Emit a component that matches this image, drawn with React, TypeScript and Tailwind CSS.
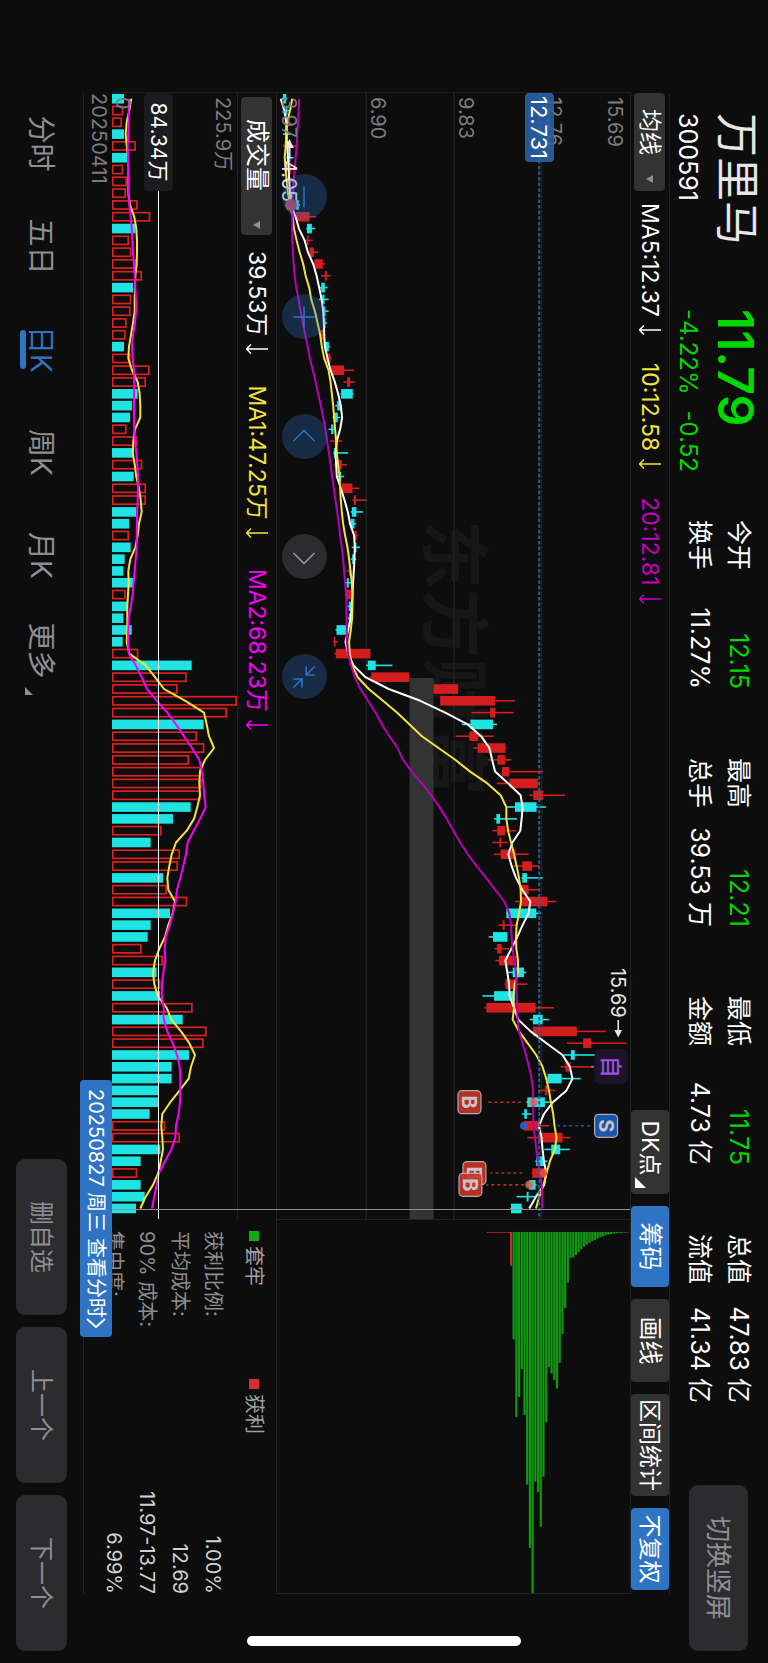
import { useState } from "react";
import type { ReactNode } from "react";

// [low, bodyLow, bodyHigh, high, up] - heights in ticks above the chart floor
const CANDLES: number[][] = [
  [15, 18, 28, 31, 0], [21, 26, 31, 39, 0], [24, 28, 34, 38, 1], [18, 28, 33, 40, 0], [18, 33, 40, 64, 1],
  [28, 35, 40, 50, 0], [30, 34, 42, 46, 1], [28, 32, 40, 48, 1], [34, 38, 44, 52, 1], [40, 56, 66, 69, 0],
  [57, 57, 98, 118, 1], [88, 90, 105, 115, 0], [80, 90, 95, 108, 1], [95, 98, 111, 124, 1], [111, 113, 138, 145, 1],
  [133, 144, 150, 161, 1], [128, 133, 144, 152, 0], [126, 136, 143, 155, 0], [137, 139, 146, 155, 0], [138, 139, 146, 151, 0],
  [130, 131, 145, 146, 1], [143, 144, 156, 160, 0], [146, 148, 161, 164, 1], [160, 163, 202, 232, 1], [200, 211, 220, 234, 1],
  [191, 193, 228, 230, 0], [175, 181, 193, 195, 0], [167, 171, 183, 190, 0], [155, 163, 170, 177, 0], [160, 174, 180, 196, 1],
  [169, 171, 178, 214, 0], [172, 181, 195, 210, 1], [183, 187, 193, 202, 0], [193, 195, 227, 248, 1], [227, 231, 238, 270, 1],
  [222, 225, 239, 259, 0], [216, 222, 233, 238, 0], [229, 232, 240, 244, 1], [225, 234, 239, 250, 0], [222, 226, 234, 238, 0],
  [211, 216, 221, 225, 1], [203, 210, 216, 227, 0], [204, 207, 223, 225, 1], [212, 216, 224, 228, 0], [213, 216, 224, 228, 0],
  [176, 179, 210, 212, 0], [169, 171, 176, 183, 1], [172, 177, 281, 281, 1], [268, 273, 297, 347, 0], [279, 284, 398, 398, 1],
  [471, 471, 545, 545, 1], [491, 491, 656, 716, 1], [585, 641, 657, 712, 1], [556, 582, 650, 662, 0], [537, 579, 605, 652, 1],
  [591, 604, 686, 691, 1], [636, 663, 687, 705, 1], [677, 677, 699, 801, 1], [661, 699, 785, 787, 1], [759, 771, 800, 866, 1],
  [691, 716, 781, 809, 0], [653, 660, 671, 722, 0], [648, 663, 686, 720, 1], [648, 669, 675, 695, 1], [652, 673, 718, 757, 1],
  [707, 738, 767, 789, 1], [735, 738, 752, 799, 0], [733, 733, 757, 789, 1], [716, 733, 813, 840, 1], [690, 690, 780, 794, 0],
  [666, 679, 685, 721, 1], [637, 650, 693, 693, 0], [654, 662, 676, 698, 1], [657, 668, 719, 722, 1], [691, 709, 743, 750, 0],
  [685, 687, 721, 754, 1], [618, 653, 716, 716, 0], [624, 630, 778, 833, 1], [760, 770, 799, 818, 0], [770, 770, 902, 989, 1],
  [872, 921, 946, 1052, 1], [862, 884, 896, 998, 0], [854, 868, 883, 950, 1], [808, 814, 856, 914, 0], [786, 806, 813, 836, 1],
  [750, 753, 806, 821, 0], [737, 744, 752, 766, 0], [743, 743, 789, 818, 1], [753, 787, 859, 883, 1], [804, 825, 852, 881, 0],
  [777, 780, 803, 814, 0], [766, 768, 811, 811, 1], [753, 758, 778, 781, 0], [721, 751, 757, 777, 0], [702, 704, 736, 739, 0],
];

const MA5 = [
  11, 22, 28, 28, 31, 33, 35, 37, 39, 42, 56, 66, 83, 93, 109, 119, 127, 134, 139, 141, 142, 144, 152, 161, 174, 184, 192, 196,
  190, 180, 176, 178, 180, 192, 203, 213, 220, 232, 234, 233, 231, 229, 227, 225, 222, 214, 206, 214, 230, 266, 336, 431, 506,
  574, 614, 639, 647, 656, 696, 733, 739, 736, 732, 708, 696, 706, 719, 738, 762, 757, 739, 723, 705, 687, 693, 698, 700, 713,
  726, 763, 811, 859, 881, 889, 871, 830, 803, 788, 796, 799, 803, 810, 804, 779, 759,
];
const MA10 = [
  46, 39, 31, 28, 26, 23, 26, 29, 33, 39, 47, 51, 59, 68, 79, 86, 97, 103, 114, 122, 130, 135, 142, 155, 161, 165, 169, 172,
  175, 178, 180, 184, 188, 190, 192, 195, 199, 205, 212, 217, 221, 225, 227, 227, 226, 222, 217, 219, 226, 243, 276, 319, 361,
  399, 436, 486, 536, 581, 633, 673, 690, 690, 695, 704, 713, 721, 728, 733, 734, 728, 721, 719, 720, 725, 725, 715, 711, 713,
  709, 728, 754, 780, 799, 810, 818, 824, 831, 835, 841, 836, 821, 811, 802, 789, 779,
];
const MA20 = [
  67, 65, 63, 61, 59, 56, 53, 50, 48, 46, 46, 46, 46, 48, 50, 53, 58, 65, 71, 78, 85, 92, 99, 108, 116, 124, 132, 139, 146, 151,
  156, 161, 166, 171, 176, 181, 186, 190, 195, 199, 202, 205, 208, 209, 209, 210, 210, 214, 223, 234, 251, 274, 296, 316, 338,
  363, 379, 406, 436, 464, 489, 511, 531, 551, 574, 601, 629, 656, 684, 699, 704, 706, 709, 714, 719, 720, 721, 722, 724, 728,
  739, 749, 758, 766, 770, 771, 771, 772, 776, 780, 785, 792, 796, 798, 798,
];

const VOLUMES = [
  36, 34, 30, 36, 72, 45, 34, 45, 42, 77, 115, 70, 51, 58, 72, 90, 63, 58, 56, 44, 41, 36, 56, 113, 102, 77, 60, 54, 44, 75, 66,
  91, 65, 102, 102, 73, 51, 51, 56, 38, 34, 65, 41, 46, 34, 59, 32, 79, 239, 224, 197, 375, 345, 275, 255, 277, 231, 266, 269,
  266, 236, 183, 149, 116, 204, 198, 153, 165, 226, 174, 116, 107, 89, 153, 134, 145, 144, 242, 212, 284, 275, 231, 179, 179,
  139, 139, 113, 160, 204, 145, 86, 76, 86, 98, 72,
];
// ten bars per row, 1 = up day
const VOLUME_UP = [
  "0110101111",
  "1011110111",
  "1011100011",
  "0101100100",
  "0010000101",
  "1110111111",
  "0010110110",
  "0011010101",
  "1000000110",
  "01000",
].join("");
const VOL_MA1 = [
  58, 52, 44, 41, 44, 48, 49, 49, 49, 54, 67, 73, 75, 75, 74, 70, 69, 68, 68, 63, 57, 51, 49, 60, 77, 83, 85, 85, 69, 64, 62, 68,
  73, 81, 86, 89, 81, 77, 70, 55, 49, 50, 48, 46, 46, 46, 44, 52, 101, 129, 156, 220, 276, 284, 291, 306, 279, 264, 262, 264,
  256, 246, 224, 192, 179, 172, 166, 169, 189, 182, 169, 159, 142, 129, 123, 127, 137, 164, 178, 207, 232, 249, 237, 230, 203,
  175, 151, 148, 151, 153, 146, 139, 123, 101, 85,
];
const VOL_MA2 = [
  51, 50, 50, 49, 47, 48, 48, 49, 49, 52, 56, 59, 61, 63, 66, 68, 70, 72, 72, 69, 63, 60, 62, 66, 67, 66, 66, 66, 67, 69, 73, 76,
  78, 78, 77, 76, 75, 74, 74, 71, 68, 65, 62, 56, 50, 49, 48, 50, 71, 89, 105, 135, 166, 192, 216, 240, 262, 270, 274, 277, 281,
  264, 245, 227, 222, 214, 205, 195, 191, 183, 173, 161, 158, 160, 154, 150, 149, 155, 155, 166, 182, 195, 203, 205, 205, 204,
  200, 192, 190, 178, 159, 141, 134, 127, 120,
];

const CHIPS = [
  324, 558, 498, 414, 552, 762, 953, 1089, 753, 785, 889, 738, 574, 408, 427, 447, 472, 395, 308, 229, 153, 78, 77, 70, 61, 52,
  44, 38, 33, 28, 24, 20, 16, 13, 10, 8, 6, 5, 4, 3, 3, 2, 2,
];

const UP = "#d41e1e";
const DOWN = "#20e3e3";
const STEP = 11.806;
const W = 1126;
const H = 354;
const VH = 125;

const cx = (i: number) => 5.7 + i * STEP;
const py = (t: number) => H - t / 3;
const line = (values: number[], height: number) =>
  values.map((v, i) => `${cx(i).toFixed(1)},${(height - v / 3).toFixed(1)}`).join(" ");

const QUOTES = [
  { label: "今开", value: "12.15", green: true },
  { label: "最高", value: "12.21", green: true },
  { label: "最低", value: "11.75", green: true },
  { label: "总值", value: "47.83 亿", green: false },
  { label: "换手", value: "11.27%", green: false },
  { label: "总手", value: "39.53 万", green: false },
  { label: "金额", value: "4.73 亿", green: false },
  { label: "流值", value: "41.34 亿", green: false },
];

const STATS = [
  ["获利比例:", "1.00%"],
  ["平均成本:", "12.69"],
  ["90% 成本:", "11.97-13.77"],
  ["集中度:", "6.99%"],
];

const PERIODS = ["分时", "五日", "日K", "周K", "月K", "更多"];

function Down() {
  return (
    <svg viewBox="0 0 10 22" className="ml-2 h-[22px] w-[10px]" fill="none" stroke="currentColor" strokeWidth="1.4" aria-hidden="true">
      <path d="M5 0V21.5M0.6 17L5 21.5L9.4 17" />
    </svg>
  );
}

function Average({ className, children }: { className: string; children: ReactNode }) {
  return (
    <span className={`flex items-center whitespace-nowrap text-[23px] leading-none ${className}`}>
      {children}
      <Down />
    </span>
  );
}

function Marker({ i, y, letter }: { i: number; y: number; letter: string }) {
  return (
    <g>
      <rect x={cx(i) - 11.5} y={y} width="23" height="23" rx="4" fill={letter === "B" ? "#c73428" : "#1b5ebd"} fillOpacity="0.9" stroke="#b5a9ab" strokeWidth="1.2" />
      <text x={cx(i)} y={y + 18.5} textAnchor="middle" fontSize="20" fontWeight="700" fill="#c9c3c6">
        {letter}
      </text>
    </g>
  );
}

function PriceChart() {
  return (
    <svg viewBox={`0 0 ${W} ${H}`} preserveAspectRatio="none" className="block h-full w-full" role="img" aria-label="K线图">
      <text x="427" y="202" fontSize="69" fontWeight="700" fill="#171717">东方财富</text>
      {[88.5, 176.5, 264.5].map((y) => (
        <line key={y} x1="0" x2={W} y1={y} y2={y} stroke="#222224" strokeWidth="1.4" />
      ))}
      <rect x="585" y="197" width="541" height="24" fill="#333333" />

      {CANDLES.map(([low, bodyLow, bodyHigh, high, up], i) => (
        <g key={i} fill={up ? UP : DOWN}>
          <rect x={cx(i) - 0.8} y={py(high)} width="1.6" height={(high - low) / 3} />
          <rect x={cx(i) - 4.8} y={py(bodyHigh)} width="9.6" height={(bodyHigh - bodyLow) / 3} />
        </g>
      ))}

      {/* trade markers */}
      <g strokeWidth="1.6" strokeDasharray="3 3">
        <line x1={cx(85)} x2={cx(85)} y1="109" y2="145" stroke="#b0301f" />
        <line x1={cx(91)} x2={cx(91)} y1="108" y2="140" stroke="#b0301f" />
        <line x1={cx(92)} x2={cx(92)} y1="106" y2="144" stroke="#b0301f" />
        <line x1={cx(87)} x2={cx(87)} y1="40" y2="76" stroke="#1d52a5" />
      </g>
      <Marker i={85} y={149.5} letter="B" />
      <Marker i={91} y={144.5} letter="B" />
      <Marker i={92} y={148.5} letter="B" />
      <Marker i={87} y={12.5} letter="S" />

      <g fill="none" strokeWidth="2" strokeLinejoin="round">
        <polyline points={line(MA5, H)} stroke="#ffffff" />
        <polyline points={line(MA10, H)} stroke="#f3e53c" />
        <polyline points={line(MA20, H)} stroke="#b800b8" />
      </g>
      <circle cx={cx(85)} cy={py(772)} r="4" fill="#e0645a" fillOpacity="0.85" />
      <circle cx={cx(91)} cy={py(801)} r="4" fill="#e0542f" fillOpacity="0.85" />
      <circle cx={cx(92)} cy={py(759)} r="4" fill="#e0645a" fillOpacity="0.85" />
      <circle cx={cx(87)} cy={py(743)} r="4" fill="#3060c8" fillOpacity="0.9" />

      <g fill="#e6e6e6" fontSize="20">
        <text x="67" y="349">4.05</text>
        <text x="875" y="19">15.69</text>
        <path d="M46 341.5L55 337V340.500H66V342.500H55V346Z" />
        <path d="M944.500 11.800L937 8V11H927V12.600H937V15.600Z" />
      </g>
      <circle cx={cx(9)} cy={py(42)} r="6" fill="#c23c58" />

      <rect x={cx(82) - 17.5} y="2.500" width="35" height="33" rx="5" fill="#1e1428" />
      <text x={cx(82)} y="27" textAnchor="middle" fontSize="22" fontWeight="500" fill="#9a50e6">自</text>
      <rect x={cx(82) - 1} y="36" width="2" height="3" fill="#9a50e6" />

      <line x1="0" x2={W} y1="91" y2="91" stroke="#2c5f9f" strokeWidth="2" strokeDasharray="3.6 2" />
    </svg>
  );
}

function VolumeChart() {
  return (
    <svg viewBox={`0 0 ${W} ${VH}`} preserveAspectRatio="none" className="block h-full w-full" role="img" aria-label="成交量">
      {VOLUMES.map((v, i) =>
        VOLUME_UP[i] === "1" ? (
          <rect key={i} x={cx(i) - 4.1} y={VH - v / 3 + 0.8} width="8.2" height={v / 3 - 1.6} fill="none" stroke="#dc2020" strokeWidth="1.7" />
        ) : (
          <rect key={i} x={cx(i) - 4.8} y={VH - v / 3} width="9.6" height={v / 3} fill={DOWN} />
        )
      )}
      <g fill="none" strokeWidth="2" strokeLinejoin="round">
        <polyline points={line(VOL_MA1, VH)} stroke="#f3e53c" />
        <polyline points={line(VOL_MA2, VH)} stroke="#fa00fa" />
      </g>
    </svg>
  );
}

function ChipChart() {
  return (
    <svg viewBox={`0 0 375 ${H}`} preserveAspectRatio="none" className="block h-full w-full" role="img" aria-label="筹码分布">
      {CHIPS.map((len, i) => (
        <rect key={i} x="12" y={py(712 + i * 8.15) - 1.1} width={len / 3} height="2.200" fill="#109a12" />
      ))}
      <rect x="12" y={py(704) - 1} width="34" height="2" fill="#cc2a2a" />
      {[634, 642, 650, 658, 666, 674, 682, 690, 698].map((t) => (
        <rect key={t} x="12" y={py(t) - 1} width="1" height="2" fill="#cc2a2a" />
      ))}
    </svg>
  );
}

function ControlButton({ label, muted, children }: { label: string; muted?: boolean; children: ReactNode }) {
  return (
    <button
      type="button"
      aria-label={label}
      className={`flex size-[45px] items-center justify-center rounded-full ${
        muted ? "bg-[#2c2c2e] text-[#9a9a9e]" : "bg-[#2f74c4]/30 text-[#2f74c4]"
      }`}
    >
      <svg viewBox="0 0 24 24" className="size-6" fill="none" stroke="currentColor" strokeWidth="1.5" aria-hidden="true">
        {children}
      </svg>
    </button>
  );
}

export default function App() {
  const [period, setPeriod] = useState("日K");

  return (
    <main className="h-screen w-screen overflow-hidden bg-[#0d0d0d]">
      {/* landscape page on a portrait screen */}
      <div className="relative flex h-[100vw] w-[100vh] origin-top-left translate-x-[100vw] rotate-90 flex-col font-['Inter','Noto_Sans_CJK_SC',sans-serif] text-white">
        {/* ── Quote header ── */}
        <header className="flex h-[98px] shrink-0 items-start pl-[113px] pr-3">
          <div className="w-[196px] pt-[7px]">
            <h1 className="whitespace-nowrap text-[44px] leading-[48px] text-[#e6e6e6]">万里马</h1>
            <p className="pt-[10px] text-[25px] leading-[30px]">300591</p>
          </div>
          <div className="w-[211px] pt-[7px] text-[#00d800]">
            <p className="text-[50px] font-semibold leading-[50px]">11.79</p>
            <p className="flex gap-4 whitespace-nowrap pt-2 text-[24px] leading-[30px]">
              <span>-4.22%</span>
              <span>-0.52</span>
            </p>
          </div>
          <dl className="grid w-[883px] grid-cols-4 gap-x-[69px] pt-[10px]">
            {QUOTES.map((q) => (
              <div key={q.label} className="flex items-center justify-between whitespace-nowrap text-[25px] leading-[39px]">
                <dt>{q.label}</dt>
                <dd className={q.green ? "text-[#00d800]" : "text-white"}>{q.value}</dd>
              </div>
            ))}
          </dl>
          <button type="button" className="ml-auto mt-5 h-[59px] w-[166px] rounded-[9px] bg-[#2c2c2e] text-[26px] text-[#8e8e93]">
            切换竖屏
          </button>
        </header>

        {/* ── Indicator toolbar ── */}
        <div className="ml-[93px] mr-[69px] flex h-10 shrink-0 items-center border-y border-[#222224] pr-1">
          <button type="button" className="flex h-[31px] w-[98px] items-center justify-between rounded bg-[#333333] pl-4 pr-2 text-[23px] leading-none">
            均线
            <span className="size-0 border-x-4 border-t-[7px] border-x-transparent border-t-[#8e8e93]" />
          </button>
          <Average className="ml-3 text-white">MA5:12.37</Average>
          <Average className="ml-7 text-[#f3e53c]">10:12.58</Average>
          <Average className="ml-7 text-[#c400c4]">20:12.81</Average>
          <div className="ml-auto flex gap-3 whitespace-nowrap text-[24px] leading-none">
            <button type="button" className="relative h-[38px] w-[84px] rounded bg-[#333333] pr-2 text-[23px]">
              DK点
              <span className="absolute bottom-1 right-[6px] size-0 border-b-[11px] border-l-[11px] border-b-white border-l-transparent" />
            </button>
            <button type="button" className="h-[38px] w-[81px] rounded bg-[#2f74c4]">筹码</button>
            <button type="button" className="h-[38px] w-[83px] rounded bg-[#333333]">画线</button>
            <button type="button" className="h-[38px] w-[102px] rounded bg-[#333333] text-[23px]">区间统计</button>
            <button type="button" className="h-[38px] w-[82px] rounded bg-[#2f74c4] text-[23px]">不复权</button>
          </div>
        </div>

        {/* ── Charts ── */}
        <div className="ml-[92px] mr-[69px] flex min-h-0 flex-1">
          <section className="relative flex flex-1 flex-col border-l border-[#1c1c1e]">
            <div className="relative h-[354px] border-b border-[#222224] text-[20px] leading-none text-[#7c7c80]">
              <PriceChart />
              <span className="absolute left-1 top-[5px]">15.69</span>
              <span className="absolute left-1 top-[66px]">12.76</span>
              <span className="absolute left-1 top-[154px]">9.83</span>
              <span className="absolute left-1 top-[242px]">6.90</span>
              <span className="absolute left-1 top-[331px]">3.97</span>
              <span className="absolute left-0 top-[76px] flex h-[29px] w-[69px] items-center justify-center rounded bg-[#2a62a8]/90 text-[22px] text-white">
                12.731
              </span>
              <div className="absolute left-[81px] top-[303px] flex gap-[75px]">
                <ControlButton label="缩小"><path d="M1.500 12H22.500" /></ControlButton>
                <ControlButton label="放大"><path d="M1.500 12H22.500M12 1.500V22.500" /></ControlButton>
                <ControlButton label="左移"><path d="M16 1.500L5.500 12L16 22.500" /></ControlButton>
                <ControlButton label="右移" muted><path d="M8 1.500L18.500 12L8 22.500" /></ControlButton>
                <ControlButton label="退出全屏">
                  <path d="M1.500 1.500L10 9.800M1.500 9.800H10V1.500M22.500 22.500L14 14M22.500 14H14V22.500" />
                </ControlButton>
              </div>
            </div>

            <div className="flex h-[39px] items-center border-b border-[#222224] pl-1">
              <button type="button" className="flex h-[31px] w-[138px] items-center justify-between rounded bg-[#333333] pl-[22px] pr-[6px] text-[24px] leading-none">
                成交量
                <span className="size-0 border-x-4 border-t-[7px] border-x-transparent border-t-[#8e8e93]" />
              </button>
              <Average className="ml-4 text-white">39.53万</Average>
              <Average className="ml-[31px] text-[#f3e53c]">MA1:47.25万</Average>
              <Average className="ml-[31px] text-[#fa00fa]">MA2:68.23万</Average>
            </div>

            <div className="relative h-[125px] text-[20px] leading-none text-[#7c7c80]">
              <VolumeChart />
              <span className="absolute left-1 top-1">225.9万</span>
              <span className="absolute left-1 top-[104px]">0</span>
              <div className="absolute inset-x-0 top-[78px] h-px bg-white" />
              <span className="absolute left-0 top-16 flex h-[29px] w-[98px] items-center justify-center rounded bg-[#1c1c1e] text-[21px] text-white">
                84.34万
              </span>
            </div>
            <div className="absolute bottom-0 right-[9px] top-0 w-px bg-[#909090]" />
          </section>

          <aside className="flex w-[375px] flex-col text-[20px] leading-none">
            <div className="h-[354px] shrink-0 border-x border-b border-[#222224]">
              <ChipChart />
            </div>
            <div className="flex h-11 shrink-0 items-center pl-3 text-[#a0a0a0]">
              <span className="flex w-[148px] items-center gap-[5px]">
                <i className="size-[10px] bg-[#12a812]" />
                套牢
              </span>
              <span className="flex items-center gap-[5px]">
                <i className="size-[10px] bg-[#cf3232]" />
                获利
              </span>
            </div>
            <dl className="pl-3 pt-[2px]">
              {STATS.map(([label, value]) => (
                <div key={label} className="flex h-[33px] items-center justify-between whitespace-nowrap">
                  <dt className="text-[#8e8e8e]">{label}</dt>
                  <dd className="text-[#d0d0d0]">{value}</dd>
                </div>
              ))}
            </dl>
          </aside>
        </div>

        {/* ── Dates ── */}
        <div className="relative ml-[93px] mr-[69px] h-[29px] shrink-0 border-b border-[#222224] text-[20px] leading-none text-[#7c7c80]">
          <span className="block pt-[3px]">20250411</span>
          <a href="#minute" className="absolute left-[987px] top-0 flex h-8 w-[257px] items-center justify-center whitespace-nowrap rounded bg-[#2f74c4] text-[20px] text-white">
            20250827 周三 查看分时
            <svg viewBox="0 0 10 20" className="h-5 w-[10px]" fill="none" stroke="currentColor" strokeWidth="2" aria-hidden="true">
              <path d="M1 1L9 10L1 19" />
            </svg>
          </a>
        </div>

        {/* ── Period tabs ── */}
        <footer className="flex h-[83px] shrink-0 items-start pl-[92px] pr-3 pt-4">
          <nav className="flex">
            {PERIODS.map((p) => (
              <button
                key={p}
                type="button"
                onClick={() => setPeriod(p)}
                className={`relative flex h-[51px] w-[103px] items-center justify-center gap-2 text-[28px] leading-none ${
                  p === period ? "text-[#2f74c4]" : "text-[#8e8e93]"
                }`}
              >
                {p}
                {p === "更多" && <span className="mt-6 size-0 border-b-[8px] border-l-[8px] border-b-[#8e8e93] border-l-transparent" />}
                {p === period && <span className="absolute bottom-1 left-8 h-[6px] w-[39px] rounded-full bg-[#2f74c4]" />}
              </button>
            ))}
          </nav>
          <div className="ml-auto flex gap-3 text-[24px] leading-none text-[#8e8e93]">
            <button type="button" className="h-[51px] w-[156px] rounded-[9px] bg-[#2c2c2e]">删自选</button>
            <button type="button" className="h-[51px] w-[156px] rounded-[9px] bg-[#2c2c2e]">上一个</button>
            <button type="button" className="h-[51px] w-[156px] rounded-[9px] bg-[#2c2c2e]">下一个</button>
          </div>
        </footer>

        {/* home indicator */}
        <div className="absolute right-[17px] top-[247px] h-[274px] w-[10px] rounded-full bg-white" />
      </div>
    </main>
  );
}
